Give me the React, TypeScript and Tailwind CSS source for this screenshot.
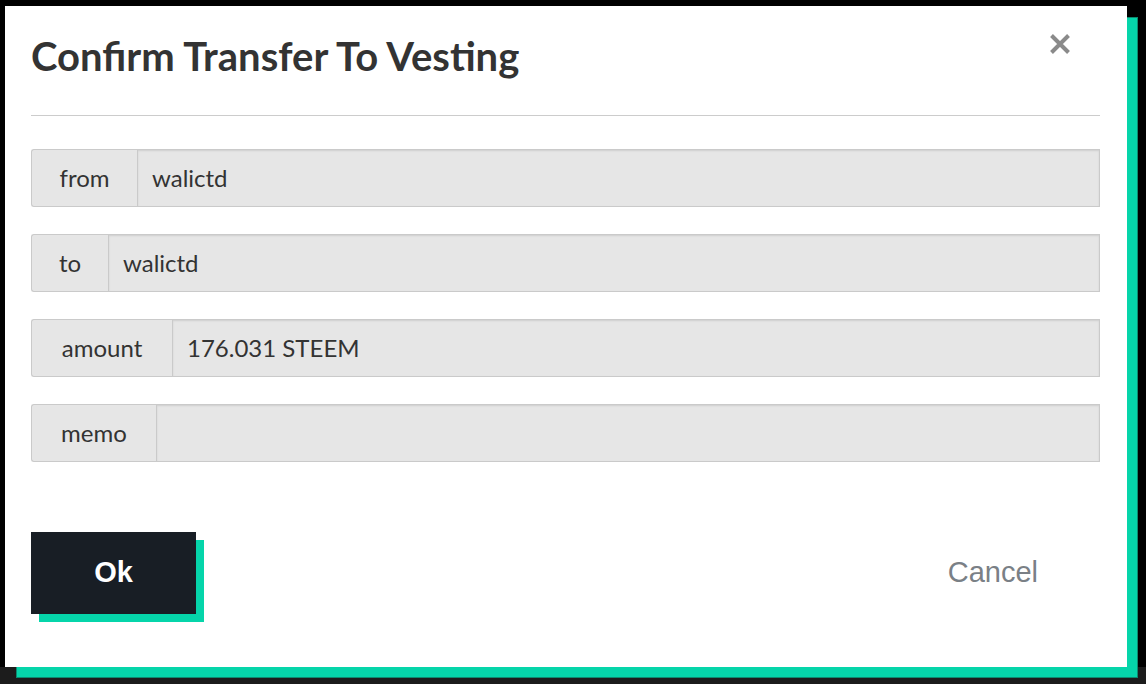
import React from "react";

const rows: { label: string; width: string; value: string }[] = [
  { label: "from", width: "w-[106px]", value: "walictd" },
  { label: "to", width: "w-[77px]", value: "walictd" },
  { label: "amount", width: "w-[141px]", value: "176.031 STEEM" },
  { label: "memo", width: "w-[125px]", value: "" },
];

export default function App() {
  return (
    <div className="relative w-[1146px] h-[684px] overflow-hidden bg-black pt-[6px] pl-[5px] font-['Lato',sans-serif]">
      <div className="absolute left-0 right-0 bottom-0 h-[17px] bg-[#1c1c1c]" />
      <div className="relative z-10 w-[1122px] h-[661px] bg-white pl-[26px] pr-[27px] shadow-[11px_11px_0_-1px_#05d5aa,11px_11px_0_0_#0c8a70]">
        <button className="absolute left-[1044px] top-[27px] w-[22px] h-[22px] flex items-center justify-center">
          <svg width="22" height="22" viewBox="0 0 22 22">
            <path d="M2.5 2.5 L19.5 19.5 M19.5 2.5 L2.5 19.5" stroke="#8a8a8a" strokeWidth="4" fill="none" />
          </svg>
        </button>
        <h1 className="pt-[26px] h-[74px] text-[40px] leading-[48px] font-bold text-[#333333] whitespace-nowrap">
          Confirm Transfer To Vesting
        </h1>
        <div className="mt-[35px] h-px bg-[#cccccc]" />
        <div className="mt-[33px] flex flex-col gap-[27px]">
          {rows.map((r) => (
            <div key={r.label} className="flex h-[58px]">
              <div
                className={`${r.width} shrink-0 flex items-center justify-center rounded-l-[3px] border border-[#cacaca] border-r-0 bg-[#e6e6e6] text-[24px] text-[#333333]`}
              >
                {r.label}
              </div>
              <div className="flex-1 flex items-center border border-[#cacaca] bg-[#e6e6e6] pl-[14px] text-[24px] text-[#333333] shadow-[inset_0_1px_2px_rgba(10,10,10,0.1)]">
                {r.value}
              </div>
            </div>
          ))}
        </div>
        <div className="mt-[70px] flex items-center justify-between">
          <button className="w-[165px] h-[82px] bg-[#181e25] text-white text-[29px] font-bold font-['Liberation_Sans',Arial,sans-serif] shadow-[8px_8px_0_#05d5aa]">
            Ok
          </button>
          <button className="mr-[62px] text-[29px] text-[#7a8086] font-['Liberation_Sans',Arial,sans-serif]">
            Cancel
          </button>
        </div>
      </div>
    </div>
  );
}
